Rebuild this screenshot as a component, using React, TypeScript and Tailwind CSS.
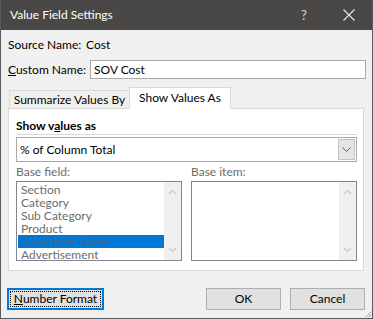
const baseFields = ["Section", "Category", "Sub Category", "Product", "Advertiser Name", "Advertisement"]

function ScrollBar() {
  return (
    <div className="w-[17px] shrink-0 bg-[#f0f0f0] flex flex-col justify-between items-center py-[7px]">
      <svg width="9" height="6" viewBox="0 0 9 6" fill="none" stroke="#c8c8c8" strokeWidth="1.2">
        <path d="M1 5l3.5-3.5L8 5" />
      </svg>
      <svg width="9" height="6" viewBox="0 0 9 6" fill="none" stroke="#c8c8c8" strokeWidth="1.2">
        <path d="M1 1l3.5 3.5L8 1" />
      </svg>
    </div>
  )
}

export default function App() {
  return (
    <div
      className="relative w-[373px] h-[319px] flex flex-col bg-[#f0f0f0] border-x border-b border-[#5a5a5a] text-[12px] text-black whitespace-nowrap"
      style={{ fontFamily: 'Lato, "Noto Sans", sans-serif' }}
    >
      {/* title bar */}
      <div className="h-[30px] shrink-0 bg-[#4a4846] flex items-center pl-[9px] text-white">
        <span className="text-[12px] leading-none">Value Field Settings</span>
        <span className="ml-auto w-[14px] text-center text-[13px] text-[#d8d8d8] leading-none">?</span>
        <div className="w-[46px] flex justify-center ml-[15px]">
          <svg width="12" height="12" viewBox="0 0 12 12" stroke="#e8e8e8" strokeWidth="1.1">
            <path d="M0.5 0.5l11 11M11.5 0.5l-11 11" />
          </svg>
        </div>
      </div>

      <div className="flex-1 flex flex-col pl-[7px] pr-[6px]">
        {/* source name */}
        <div className="mt-[7px] h-[16px] flex items-center">
          <span className="w-[78px] shrink-0">Source Name:</span>
          <span>Cost</span>
        </div>

        {/* custom name */}
        <div className="mt-[7px] h-[19px] flex items-center">
          <span className="w-[82px] shrink-0">
            <span className="underline">C</span>ustom Name:
          </span>
          <div className="flex-1 h-[19px] bg-white border border-[#a9a9a9] flex items-center px-[3px]">
            SOV Cost
          </div>
        </div>

        {/* tabs */}
        <div className="mt-[8px] h-[21px] flex items-end pl-[1px]">
          <div className="w-[120px] h-[18px] bg-[#f0f0f0] border-t border-l border-[#d9d9d9] flex items-center justify-center">
            Summarize Values By
          </div>
          <div className="relative z-10 w-[102px] h-[22px] -mb-px bg-white border-t border-x border-[#d9d9d9] flex items-center justify-center pb-[1px]">
            Show Values As
          </div>
        </div>

        <div className="w-[356px] h-[163px] bg-white border border-[#d9d9d9] pl-[7px] pr-[6px]">
          <div className="pt-[8px]">
            <div className="h-[17px] leading-[17px] font-bold">
              Show v<span className="underline">a</span>lues as
            </div>
            <div className="h-px bg-[#d9d9d9]" />
          </div>

          {/* dropdown */}
          <div className="mt-[2px] h-[25px] border border-[#a9a9a9] flex">
            <div className="flex-1 flex items-center pl-[3px]">% of Column Total</div>
            <div className="my-px mr-px w-[17px] bg-[#e5e5e5] border border-[#c4c4c4] flex items-center justify-center">
              <svg width="9" height="6" viewBox="0 0 9 6" fill="none" stroke="#606060" strokeWidth="1">
                <path d="M0.5 0.5l4 4 4-4" />
              </svg>
            </div>
          </div>

          <div className="grid grid-cols-2 gap-[9px] mt-[2px]">
            <div>
              <div className="h-[16px] leading-[16px] text-[#6d6d6d]">Base field:</div>
              <div className="mt-px h-[80px] border border-[#82878f] flex">
                <div className="flex-1 pl-px pt-px">
                  {baseFields.map(f => (
                    <div
                      key={f}
                      className={
                        f === "Advertiser Name"
                          ? "h-[13px] leading-[13px] pl-[3px] bg-[#0078d7] text-[#3a6a98]"
                          : "h-[13px] leading-[13px] pl-[3px] text-[#6d6d6d]"
                      }
                    >
                      {f}
                    </div>
                  ))}
                </div>
                <ScrollBar />
              </div>
            </div>
            <div>
              <div className="h-[16px] leading-[16px] text-[#6d6d6d]">Base item:</div>
              <div className="mt-px h-[80px] border border-[#82878f] flex">
                <div className="flex-1 bg-white" />
                <ScrollBar />
              </div>
            </div>
          </div>
        </div>

        {/* buttons */}
        <div className="mt-[17px] flex items-center -ml-px mr-px">
          <div className="w-[97px] h-[22px] border-2 border-[#0078d7] bg-[#e1e1e1] p-px">
            <div className="h-full border border-dotted border-black flex items-center justify-center">
              <span>
                <span className="underline">N</span>umber Format
              </span>
            </div>
          </div>
          <div className="ml-auto w-[75px] h-[22px] border border-[#adadad] bg-[#e1e1e1] flex items-center justify-center">
            OK
          </div>
          <div className="ml-[9px] w-[75px] h-[22px] border border-[#adadad] bg-[#e1e1e1] flex items-center justify-center">
            Cancel
          </div>
        </div>
      </div>

      {/* resize grip */}
      <svg className="absolute right-0 bottom-0" width="8" height="8" viewBox="0 0 8 8" stroke="#a0a0a0" strokeWidth="1">
        <path d="M7.5 1.5l-6 6M7.5 4.5l-3 3" />
      </svg>
    </div>
  )
}
